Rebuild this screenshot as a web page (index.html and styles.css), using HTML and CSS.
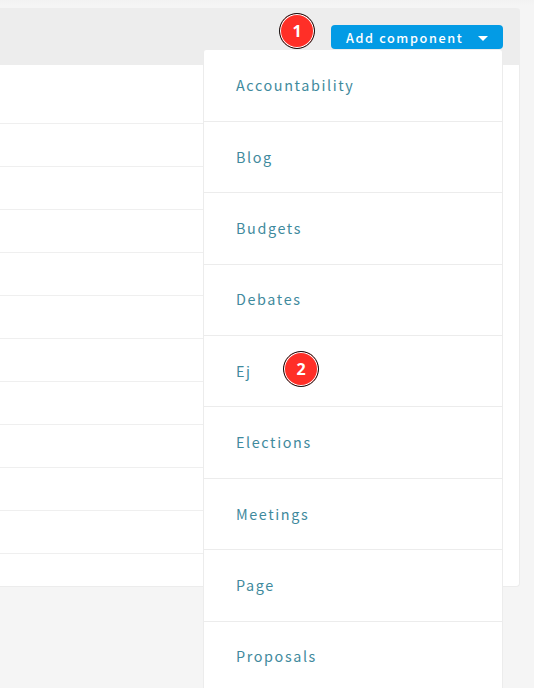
FILE: index.html
```html
<!DOCTYPE html>
<html lang="en">
<head>
<meta charset="utf-8">
<title>Components</title>
<link rel="stylesheet" href="styles.css">
</head>
<body>
<main class="card">
  <header class="card-header">
    <div class="dropdown">
      <button class="button" type="button"><span class="button-label">Add component</span><svg class="caret" viewBox="0 0 10 5"><path d="M0 0H10L5 5Z"/></svg></button>
      <ul class="menu">
        <li><a>Accountability</a></li>
        <li><a>Blog</a></li>
        <li><a>Budgets</a></li>
        <li><a>Debates</a></li>
        <li><a>Ej</a></li>
        <li><a>Elections</a></li>
        <li><a>Meetings</a></li>
        <li><a>Page</a></li>
        <li><a>Proposals</a></li>
      </ul>
    </div>
  </header>
  <div class="rows">
    <div></div><div></div><div></div><div></div><div></div><div></div>
    <div></div><div></div><div></div><div></div><div></div>
  </div>
</main>
<span class="marker marker-one">1</span>
<span class="marker marker-two">2</span>
</body>
</html>
```
FILE: styles.css
```css
* { box-sizing: border-box; }
body {
  margin: 0;
  height: 688px;
  padding-top: 8px;
  overflow: hidden;
  position: relative;
  background: linear-gradient(#f2f2f2, #f5f5f5 6px);
  font-family: "Noto Sans CJK SC", "Noto Sans", sans-serif;
}
.card {
  width: 520px;
  height: 579px;
  background: #fff;
  border: solid #ececec;
  border-width: 0 1px 1px 0;
  border-radius: 0 4px 4px 0;
}
.card-header {
  height: 57px;
  width: 520px;
  padding: 17px 17px 0 0;
  display: flex;
  justify-content: flex-end;
  background: #ededed;
  border-radius: 0 4px 0 0;
}
.dropdown { position: relative; height: 24px; }
.button {
  width: 172px;
  height: 24px;
  padding: 2px 15px 0;
  display: flex;
  align-items: center;
  justify-content: space-between;
  border: 0;
  border-radius: 4px;
  background: #039be5;
  color: #fff;
  font: 500 12.7px/22px "Noto Sans CJK SC", sans-serif;
  letter-spacing: 1.6px;
  white-space: nowrap;
}
.caret { width: 10px; height: 5px; fill: #fff; }
.menu {
  position: absolute;
  top: 25px;
  right: 0;
  width: 300px;
  margin: 0;
  padding: 0.5px 0 0;
  list-style: none;
  background: #fff;
  border: 1px solid #ececec;
  border-top: 0;
  border-radius: 3px 3px 0 0;
}
.menu li {
  height: 71.38px;
  padding: 24.8px 32px 0;
  border-bottom: 1px solid #ececec;
  color: #3f8a9d;
  font-size: 14.4px;
  line-height: 20px;
  letter-spacing: 1.6px;
}
.rows { margin-right: 17px; }
.rows div { height: 43px; border-bottom: 1px solid #efefef; }
.rows div:first-child { height: 59px; }
.marker {
  position: absolute;
  width: 36px;
  height: 36px;
  border-radius: 50%;
  border: 1px solid #111;
  box-shadow: inset 0 0 0 1px #fff;
  background: #ff2f27;
  color: #fff;
  font: 700 16px/35px "Open Sans", sans-serif;
  text-align: center;
}
.marker-one { left: 279px; top: 13px; }
.marker-two { left: 283px; top: 351px; }
```
